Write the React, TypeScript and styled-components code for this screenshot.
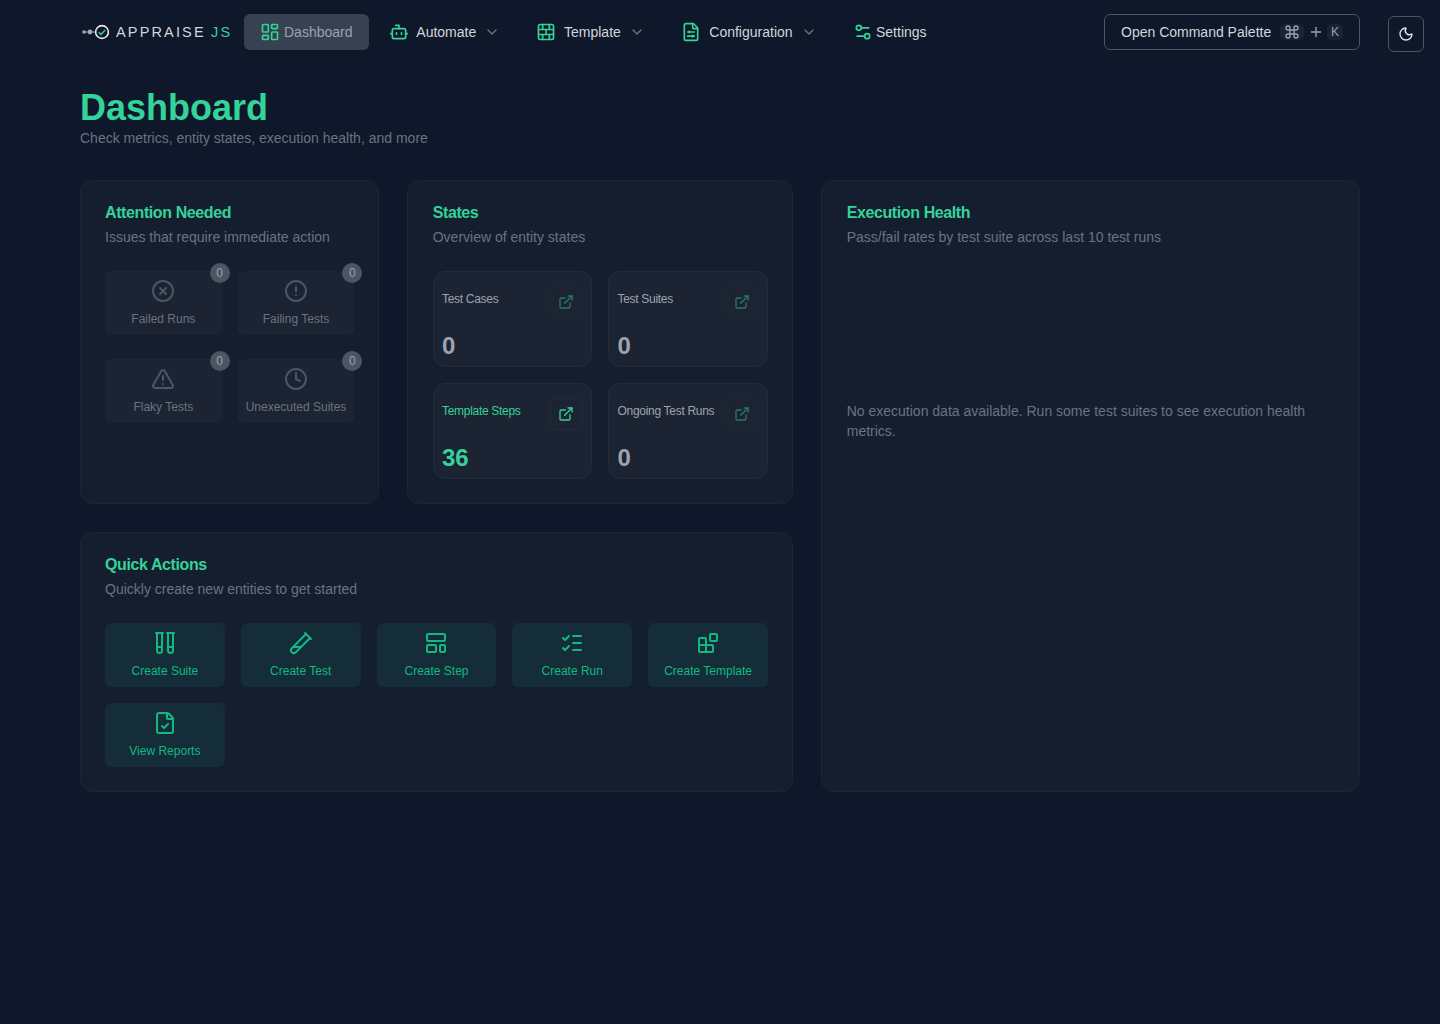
import React from "react";
import styled, { createGlobalStyle } from "styled-components";
import {
  LayoutDashboard, Bot, BrickWall, FileSliders, Settings2, ChevronDown, Command, Plus, Moon,
  CircleX, CircleAlert, TriangleAlert, Clock, ExternalLink, TestTubes, TestTubeDiagonal,
  LayoutTemplate, ListChecks, FileCheck,
} from "lucide-react";

const Global = createGlobalStyle`
  html, body { margin: 0; padding: 0; background: #0f172a; }
  body { font-family: "Liberation Sans", Arial, sans-serif; min-height: 1024px; }
  * { box-sizing: border-box; }
`;

const Page = styled.div`
  min-height: 1024px;
  background: #0f172a;
  color: #e2e8f0;
  display: flex;
  flex-direction: column;
`;

const TopBar = styled.header`
  height: 64px;
  padding: 0 16px 0 80px;
  display: flex;
  align-items: center;
`;

const Logo = styled.div`
  width: 164px;
  display: flex;
  align-items: center;
  gap: 6px;
  font-size: 14.5px;
  letter-spacing: 2.15px;
  word-spacing: -0.8px;
  color: #d1d5db;
  white-space: nowrap;
`;

const LogoAccent = styled.span`
  color: #34d399;
`;

const Nav = styled.nav`
  display: flex;
  align-items: center;
`;

const NavItem = styled.div<{ $active?: boolean; $w: number; $pl: number; $gap: number }>`
  height: 36px;
  width: ${(p) => p.$w}px;
  padding-left: ${(p) => p.$pl}px;
  border-radius: 6px;
  display: flex;
  align-items: center;
  gap: ${(p) => p.$gap}px;
  font-size: 14px;
  background: ${(p) => (p.$active ? "#374151" : "transparent")};
  color: ${(p) => (p.$active ? "#9ca3af" : "#d1d5db")};
  svg.main { color: #34d399; flex: none; }
  svg.chev { color: #6b7280; flex: none; }
`;

const Spacer = styled.div`
  flex: 1;
`;

const PaletteButton = styled.div`
  width: 256px;
  height: 36px;
  border: 1px solid #4b5563;
  border-radius: 6px;
  display: flex;
  align-items: center;
  padding: 0 16px;
  font-size: 14px;
  color: #d1d5db;
  white-space: nowrap;
`;

const CommandKey = styled.span`
  margin-left: 9px;
  width: 24px;
  height: 16px;
  border-radius: 5px;
  background: #1a2333;
  color: #9ca3af;
  display: inline-flex;
  align-items: center;
  justify-content: center;
`;

const LetterKey = styled.span`
  margin-left: 3px;
  width: 16px;
  height: 16px;
  border-radius: 5px;
  background: #1a2333;
  color: #9ca3af;
  font-size: 12px;
  display: inline-flex;
  align-items: center;
  justify-content: center;
`;

const PlusSign = styled.span`
  margin-left: 4px;
  display: inline-flex;
  color: #9ca3af;
`;

const ThemeButton = styled.div`
  width: 36px;
  height: 36px;
  margin: 4px 0 0 28px;
  border: 1px solid #4b5563;
  border-radius: 6px;
  display: flex;
  align-items: center;
  justify-content: center;
  color: #e5e7eb;
`;

const Main = styled.main`
  padding: 24px 80px 0;
`;

const Title = styled.h1`
  margin: 0;
  font-size: 36px;
  line-height: 40px;
  font-weight: 700;
  color: #34d399;
`;

const Subtitle = styled.p`
  margin: 0;
  font-size: 14px;
  line-height: 20px;
  color: #6b7280;
`;

const Grid = styled.div`
  margin-top: 32px;
  display: grid;
  grid-template-columns: 299.33px 386px 1fr;
  grid-template-rows: 324px 260px;
  gap: 28px;
`;

const Card = styled.section<{ $area: string; $pl?: number }>`
  grid-area: ${(p) => p.$area};
  background: #151e2f;
  border: 1px solid #1a2436;
  border-radius: 12px;
  padding: 24px;
  padding-left: ${(p) => p.$pl ?? 24}px;
`;

const CardTitle = styled.h2`
  margin: 0;
  font-size: 16px;
  line-height: 16px;
  font-weight: 600;
  letter-spacing: -0.4px;
  color: #34d399;
`;

const CardDesc = styled.p`
  margin: 6px 0 0;
  font-size: 14px;
  line-height: 20px;
  color: #6b7280;
`;

const AttentionGrid = styled.div`
  margin-top: 24px;
  display: grid;
  grid-template-columns: repeat(2, 1fr);
  grid-auto-rows: 64px;
  gap: 24px 16px;
`;

const AttentionItem = styled.div`
  position: relative;
  background: #1c2433;
  border-radius: 6px;
  display: flex;
  flex-direction: column;
  align-items: center;
  padding-top: 8px;
  color: #4b5563;
`;

const AttentionLabel = styled.span`
  margin-top: 8px;
  font-size: 12px;
  line-height: 16px;
  color: #6b7280;
  white-space: nowrap;
`;

const Badge = styled.span`
  position: absolute;
  top: -8px;
  right: -8px;
  width: 20px;
  height: 20px;
  border-radius: 50%;
  background: #4b5563;
  color: #9ca3af;
  font-size: 12px;
  display: flex;
  align-items: center;
  justify-content: center;
`;

const StatGrid = styled.div`
  margin-top: 24px;
  display: grid;
  grid-template-columns: 159.5px 159.5px;
  grid-auto-rows: 96px;
  gap: 16px;
`;

const Stat = styled.div<{ $on?: boolean }>`
  position: relative;
  background: #1c2433;
  border: 1px solid #222b3b;
  border-radius: 12px;
  padding: 19px 8px 0 8.3px;
  color: ${(p) => (p.$on ? "#34d399" : "#9ca3af")};
`;

const StatLabel = styled.div`
  font-size: 12px;
  line-height: 16px;
  letter-spacing: -0.3px;
`;

const StatValue = styled.div`
  margin-top: 23px;
  font-size: 24px;
  line-height: 32px;
  font-weight: 700;
`;

const StatLink = styled.span<{ $on?: boolean }>`
  position: absolute;
  top: 14px;
  right: 8.5px;
  width: 33px;
  height: 32px;
  border-radius: 6px;
  border: 1px solid ${(p) => (p.$on ? "#232c3c" : "#1e2736")};
  display: flex;
  align-items: center;
  justify-content: center;
  color: ${(p) => (p.$on ? "#34d399" : "#267a66")};
`;

const ActionGrid = styled.div`
  margin-top: 24px;
  width: 663px;
  display: grid;
  grid-template-columns: repeat(5, 1fr);
  grid-auto-rows: 64px;
  gap: 16px;
`;

const Action = styled.div`
  background: #152d38;
  border-radius: 6px;
  display: flex;
  flex-direction: column;
  align-items: center;
  padding-top: 8px;
  color: #10b981;
`;

const ActionLabel = styled.span`
  margin-top: 8px;
  font-size: 12px;
  line-height: 16px;
  white-space: nowrap;
`;

const Empty = styled.p`
  margin: 154px 0 0;
  font-size: 14px;
  line-height: 20px;
  color: #6b7280;
`;

const LogoMark = () => (
  <svg width="30" height="16" viewBox="0 0 30 16" fill="none">
    <circle cx="4" cy="8" r="1.8" fill="#a3a8b0" />
    <circle cx="10" cy="8" r="2.4" fill="#a3a8b0" />
    <path d="M4 8h12" stroke="#a3a8b0" strokeWidth="1" />
    <circle cx="22" cy="8" r="6.4" stroke="#e5e7eb" strokeWidth="1.6" />
    <path d="M18.8 8.2l2.2 2.3 4.2-4.6" stroke="#34d399" strokeWidth="1.5" />
  </svg>
);

const BlocksIcon = ({ size = 24 }: { size?: number }) => (
  <svg width={size} height={size} viewBox="0 0 24 24" fill="none" stroke="currentColor" strokeWidth="2" strokeLinecap="round" strokeLinejoin="round">
    <rect width="7" height="7" x="14" y="3" rx="1" />
    <path d="M10 21V8a1 1 0 0 0-1-1H4a1 1 0 0 0-1 1v12a1 1 0 0 0 1 1h12a1 1 0 0 0 1-1v-5a1 1 0 0 0-1-1H3" />
  </svg>
);

const attention = [
  { label: "Failed Runs", Icon: CircleX },
  { label: "Failing Tests", Icon: CircleAlert },
  { label: "Flaky Tests", Icon: TriangleAlert },
  { label: "Unexecuted Suites", Icon: Clock },
];

const stats = [
  { label: "Test Cases", value: "0" },
  { label: "Test Suites", value: "0" },
  { label: "Template Steps", value: "36", on: true },
  { label: "Ongoing Test Runs", value: "0" },
];

const actions = [
  { label: "Create Suite", Icon: TestTubes },
  { label: "Create Test", Icon: TestTubeDiagonal },
  { label: "Create Step", Icon: LayoutTemplate },
  { label: "Create Run", Icon: ListChecks },
  { label: "Create Template", Icon: BlocksIcon },
  { label: "View Reports", Icon: FileCheck },
];

export default function App() {
  return (
    <Page>
      <Global />
      <TopBar>
        <Logo>
          <LogoMark />
          <span>APPRAISE <LogoAccent>JS</LogoAccent></span>
        </Logo>
        <Nav>
          <NavItem $active $w={125} $pl={16} $gap={4}><LayoutDashboard className="main" size={20} />Dashboard</NavItem>
          <NavItem $w={148} $pl={19.8} $gap={7.5}><Bot className="main" size={20} />Automate<ChevronDown className="chev" size={16} /></NavItem>
          <NavItem $w={146} $pl={19} $gap={8}><BrickWall className="main" size={20} />Template<ChevronDown className="chev" size={16} /></NavItem>
          <NavItem $w={172} $pl={17.8} $gap={8.5}><FileSliders className="main" size={20} />Configuration<ChevronDown className="chev" size={16} /></NavItem>
          <NavItem $w={110} $pl={18} $gap={3}><Settings2 className="main" size={20} />Settings</NavItem>
        </Nav>
        <Spacer />
        <PaletteButton>
          Open Command Palette
          <CommandKey><Command size={16} /></CommandKey>
          <PlusSign><Plus size={16} /></PlusSign>
          <LetterKey>K</LetterKey>
        </PaletteButton>
        <ThemeButton><Moon size={16} /></ThemeButton>
      </TopBar>
      <Main>
        <Title>Dashboard</Title>
        <Subtitle>Check metrics, entity states, execution health, and more</Subtitle>
        <Grid>
          <Card $area="1 / 1 / 2 / 2">
            <CardTitle>Attention Needed</CardTitle>
            <CardDesc>Issues that require immediate action</CardDesc>
            <AttentionGrid>
              {attention.map(({ label, Icon }) => (
                <AttentionItem key={label}>
                  <Badge>0</Badge>
                  <Icon size={24} />
                  <AttentionLabel>{label}</AttentionLabel>
                </AttentionItem>
              ))}
            </AttentionGrid>
          </Card>
          <Card $area="1 / 2 / 2 / 3" $pl={24.4}>
            <CardTitle>States</CardTitle>
            <CardDesc>Overview of entity states</CardDesc>
            <StatGrid>
              {stats.map((s) => (
                <Stat key={s.label} $on={s.on}>
                  <StatLabel>{s.label}</StatLabel>
                  <StatValue>{s.value}</StatValue>
                  <StatLink $on={s.on}><ExternalLink size={16} /></StatLink>
                </Stat>
              ))}
            </StatGrid>
          </Card>
          <Card $area="1 / 3 / 3 / 4" $pl={24.4}>
            <CardTitle>Execution Health</CardTitle>
            <CardDesc>Pass/fail rates by test suite across last 10 test runs</CardDesc>
            <Empty>No execution data available. Run some test suites to see execution health metrics.</Empty>
          </Card>
          <Card $area="2 / 1 / 3 / 3">
            <CardTitle>Quick Actions</CardTitle>
            <CardDesc>Quickly create new entities to get started</CardDesc>
            <ActionGrid>
              {actions.map(({ label, Icon }) => (
                <Action key={label}>
                  <Icon size={24} />
                  <ActionLabel>{label}</ActionLabel>
                </Action>
              ))}
            </ActionGrid>
          </Card>
        </Grid>
      </Main>
    </Page>
  );
}
